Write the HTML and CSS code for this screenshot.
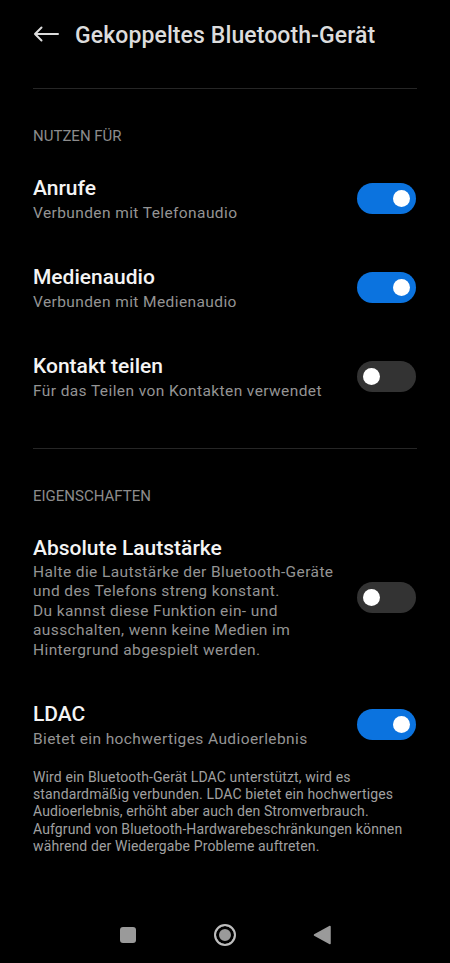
FILE: index.html
```html
<!DOCTYPE html>
<html lang="de">
<head>
  <meta charset="UTF-8" />
  <meta name="viewport" content="width=device-width, initial-scale=1" />
  <title>Gekoppeltes Bluetooth-Gerät</title>
  <link rel="stylesheet" href="styles.css">
</head>
<body>

  <div class="screen">
    <header class="topbar">
      <svg class="back" width="26" height="16" viewBox="0 0 26 16">
        <path d="M25 8H2M8.5 1.5L2 8l6.5 6.5" fill="none" stroke="#dcdcdc" stroke-width="2" stroke-linecap="round" stroke-linejoin="round" />
      </svg>
      <h1>Gekoppeltes Bluetooth-Gerät</h1>
    </header>

    <div class="content">
      <hr class="divider" />

      <div class="section-label">NUTZEN FÜR</div>

      <div class="row">
        <div class="text">
          <div class="title">Anrufe</div>
          <div class="sub">Verbunden mit Telefonaudio</div>
        </div>
        <span class="switch on"></span>
      </div>

      <div class="row">
        <div class="text">
          <div class="title">Medienaudio</div>
          <div class="sub">Verbunden mit Medienaudio</div>
        </div>
        <span class="switch on"></span>
      </div>

      <div class="row">
        <div class="text">
          <div class="title">Kontakt teilen</div>
          <div class="sub">Für das Teilen von Kontakten verwendet</div>
        </div>
        <span class="switch"></span>
      </div>

      <hr class="divider second" />

      <div class="section-label">EIGENSCHAFTEN</div>

      <div class="row">
        <div class="text">
          <div class="title">Absolute Lautstärke</div>
          <div class="sub long">Halte die Lautstärke der Bluetooth-Geräte und des Telefons streng konstant.<br>Du kannst diese Funktion ein- und ausschalten, wenn keine Medien im Hintergrund abgespielt werden.</div>
        </div>
        <span class="switch"></span>
      </div>

      <div class="row">
        <div class="text">
          <div class="title">LDAC</div>
          <div class="sub">Bietet ein hochwertiges Audioerlebnis</div>
        </div>
        <span class="switch on"></span>
      </div>

      <p class="note">Wird ein Bluetooth-Gerät LDAC unterstützt, wird es standardmäßig verbunden. LDAC bietet ein hochwertiges Audioerlebnis, erhöht aber auch den Stromverbrauch. Aufgrund von Bluetooth-Hardwarebeschränkungen können während der Wiedergabe Probleme auftreten.</p>
    </div>

    <nav class="navbar">
      <span class="nav-item"><span class="nav-square"></span></span>
      <span class="nav-item"><span class="nav-home"></span></span>
      <span class="nav-item">
        <svg width="18" height="20" viewBox="0 0 18 20">
          <path d="M17 1.5v17L1.5 10z" fill="#9a9a9a" stroke="#9a9a9a" stroke-width="1.5" stroke-linejoin="round" />
        </svg>
      </span>
    </nav>
  </div>

</body>
</html>
```

FILE: styles.css
```css
body {
  margin: 0;
  background: #000;
  color: #fff;
  font-family: Roboto, 'Noto Sans', sans-serif;
}

.screen {
  min-height: 100vh;
  display: flex;
  flex-direction: column;
}

.topbar {
  height: 70px;
  padding: 0 33px;
  display: flex;
  align-items: center;
  gap: 16px;
}

.back {
  display: block;
  margin-top: -2px;
}

h1 {
  margin: 0;
  font-size: 23px;
  font-weight: 500;
  letter-spacing: 0.1px;
  color: #dcdcdc;
}

.content {
  padding: 0 33px;
}

.divider {
  margin: 18px 0 0 0;
  border: none;
  border-top: 1px solid #262626;
}

.divider.second {
  margin-top: 47px;
}

.section-label {
  margin-top: 37px;
  font-size: 15px;
  line-height: 20px;
  color: #8c8c8c;
}

.row {
  display: flex;
  align-items: center;
  gap: 14px;
  margin-top: 41px;
}

.section-label + .row {
  margin-top: 29px;
}

.text {
  flex: 1;
}

.title {
  font-size: 21px;
  line-height: 26px;
  font-weight: 500;
  color: #f4f4f4;
}

.sub {
  margin-top: 2px;
  font-size: 15.5px;
  line-height: 20px;
  letter-spacing: 0.4px;
  color: #949494;
}

.sub.long {
  line-height: 19.4px;
}

.switch {
  flex: none;
  width: 59px;
  height: 31px;
  margin-right: 1px;
  margin-top: -1px;
  border-radius: 16px;
  background: #333;
  position: relative;
}

.switch::after {
  content: '';
  position: absolute;
  top: 7px;
  left: 6px;
  width: 17px;
  height: 17px;
  border-radius: 50%;
  background: #fff;
}

.switch.on {
  background: #0b73df;
}

.switch.on::after {
  left: auto;
  right: 6px;
}

.note {
  margin: 20px 0 0 0;
  font-size: 14px;
  line-height: 17.2px;
  letter-spacing: 0.12px;
  color: #a0a0a0;
}

.navbar {
  margin-top: auto;
  height: 56px;
  display: flex;
  justify-content: center;
  align-items: center;
  gap: 65px;
}

.nav-item {
  width: 32px;
  height: 32px;
  display: flex;
  align-items: center;
  justify-content: center;
}

.nav-square {
  width: 16px;
  height: 16px;
  border-radius: 3px;
  background: #9a9a9a;
}

.nav-home {
  width: 18px;
  height: 18px;
  border-radius: 50%;
  border: 2px solid #bdbdbd;
  background: #9a9a9a;
  box-shadow: inset 0 0 0 3px #000;
}
```
